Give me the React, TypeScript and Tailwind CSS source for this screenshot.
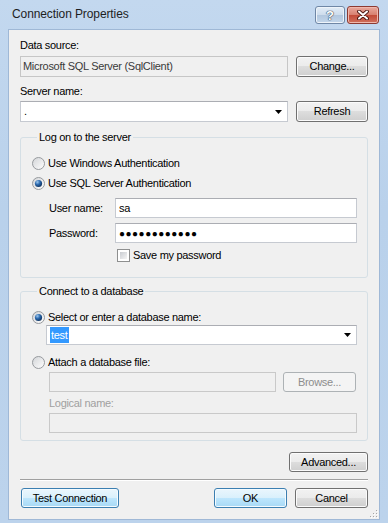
import type { ReactNode } from 'react'

const btnBase = 'flex items-center justify-center rounded-[3px] border text-[#000]'
const btnGray =
  'border-[#707070] bg-[linear-gradient(#f2f2f2_0%,#ebebeb_50%,#dddddd_50%,#cfcfcf_100%)] shadow-[inset_0_0_0_1px_#fbfbfb]'
const btnBlue =
  'border-[#3c7fb1] bg-[linear-gradient(#eaf6fd_0%,#d9f0fc_50%,#bee6fd_50%,#a7d9f5_100%)] shadow-[inset_0_0_0_1px_#f4fbff]'

function Button({ children, className = '', blue = false }: { children: ReactNode; className?: string; blue?: boolean }) {
  return <div className={`${btnBase} ${blue ? btnBlue : btnGray} ${className}`}>{children}</div>
}

function Arrow() {
  return (
    <svg width="7" height="4" viewBox="0 0 7 4" className="shrink-0">
      <path d="M0 0h7L3.5 4z" fill="#000" />
    </svg>
  )
}

function Radio({ checked = false }: { checked?: boolean }) {
  return (
    <svg width="13" height="13" viewBox="0 0 13 13" className="shrink-0">
      <defs>
        <linearGradient id="radioFill" x1="0" y1="0" x2="1" y2="1">
          <stop offset="0" stopColor="#d2d4d7" />
          <stop offset="1" stopColor="#ffffff" />
        </linearGradient>
        <radialGradient id="radioDot" cx="0.35" cy="0.3" r="0.8">
          <stop offset="0" stopColor="#9cc8f0" />
          <stop offset="0.45" stopColor="#2a68ad" />
          <stop offset="1" stopColor="#0a2850" />
        </radialGradient>
      </defs>
      <circle cx="6.5" cy="6.5" r="6" fill="url(#radioFill)" stroke="#979a9e" />
      {checked && <circle cx="6.5" cy="6.5" r="3.6" fill="url(#radioDot)" />}
    </svg>
  )
}

function Checkbox() {
  return (
    <span className="block h-[13px] w-[13px] shrink-0 border border-[#8e8f8f] bg-white p-[2px]">
      <span className="block h-full w-full bg-[linear-gradient(135deg,#c9ccd1,#f5f5f5)]" />
    </span>
  )
}

function TextBox({ children, className = '' }: { children?: ReactNode; className?: string }) {
  return (
    <div className={`flex h-[20px] items-center border border-[#c6cad1] border-t-[#abadb3] bg-white pl-[3px] ${className}`}>
      {children}
    </div>
  )
}

function DisabledBox({ className = '' }: { className?: string }) {
  return <div className={`h-[20px] border border-[#c9c9c9] bg-[#f0f0f0] ${className}`} />
}

export default function App() {
  return (
    <div className="flex h-[523px] w-[388px] flex-col bg-[linear-gradient(180deg,#c3d8ef_0%,#b9d1eb_40%,#bcd3ec_100%)] font-['Liberation_Sans',Arial,sans-serif] text-[11px] tracking-[-0.3px] text-[#000]">
      {/* title bar */}
      <div className="flex h-[29px] shrink-0 items-start justify-between">
        <div className="pl-[12px] pt-[7px] text-[12px] leading-[15px] tracking-[-0.1px] text-[#1e1e1e]">Connection Properties</div>
        <div className="mr-[9px] mt-[6px] flex gap-[2px]">
          <div className="flex h-[18px] w-[30px] items-center justify-center rounded-[3px] border border-[#6f87a6] bg-[linear-gradient(#e3edf7_0%,#cddcec_50%,#b2c7de_50%,#c3d6ea_100%)] shadow-[inset_0_0_0_1px_#eef4fa]">
            <span className="text-[13px] font-bold leading-none tracking-normal text-white [text-shadow:0_0_1px_#36495f,0_0_1px_#36495f,0_0_1px_#36495f]">?</span>
          </div>
          <div className="flex h-[18px] w-[32px] items-center justify-center rounded-[3px] border border-[#8d3a31] bg-[linear-gradient(#e9a99d_0%,#d7806f_50%,#c24a37_50%,#d0705c_100%)] shadow-[inset_0_0_0_1px_#f0b8ad]">
            <svg width="14" height="10" viewBox="0 0 14 10">
              <path d="M3 1.5l8 7M11 1.5l-8 7" stroke="#4a1610" strokeWidth="3.8" strokeLinecap="round" />
              <path d="M3 1.5l8 7M11 1.5l-8 7" stroke="#fff" strokeWidth="2" strokeLinecap="round" />
            </svg>
          </div>
        </div>
      </div>

      {/* client area */}
      <div className="relative ml-[8px] flex h-[491px] w-[372px] flex-col border border-[#9fb8d6] bg-[#f0f0f0] px-[11px] pt-[8px]">
        <div className="leading-[15px]">Data source:</div>
        <div className="mt-[3px] flex h-[21px] gap-[8px]">
          <div className="flex flex-1 items-center border border-[#c6c6c6] bg-[#f0f0f0] pl-[2px] text-[#3a3a3a]">
            Microsoft SQL Server (SqlClient)
          </div>
          <Button className="w-[72px]">Change...</Button>
        </div>

        <div className="mt-[7px] leading-[15px]">Server name:</div>
        <div className="mt-[2px] flex h-[21px] gap-[8px]">
          <TextBox className="h-[21px] flex-1 justify-between pl-[2px] pr-[5px]">
            <span>.</span>
            <Arrow />
          </TextBox>
          <Button className="w-[72px]">Refresh</Button>
        </div>

        {/* log on group */}
        <fieldset className="mt-[8px] rounded-[3px] border border-[#d5dfe5] pb-[15px] pl-[11px] pr-[10px] pt-[8px]">
          <legend className="ml-[5px] px-[2px] leading-[15px]">Log on to the server</legend>
          <div className="flex h-[20px] items-center gap-[3px]">
            <Radio />
            <span>Use Windows Authentication</span>
          </div>
          <div className="flex h-[20px] items-center gap-[3px]">
            <Radio checked />
            <span>Use SQL Server Authentication</span>
          </div>
          <div className="mt-[5px] flex items-center pl-[17px]">
            <span className="w-[66px]">User name:</span>
            <TextBox className="flex-1">sa</TextBox>
          </div>
          <div className="mt-[5px] flex items-center pl-[17px]">
            <span className="w-[66px]">Password:</span>
            <TextBox className="flex-1">
              <span className="text-[10px] tracking-[0.5px]">●●●●●●●●●●●●</span>
            </TextBox>
          </div>
          <div className="mt-[5px] flex h-[14px] items-center gap-[3px] pl-[85px]">
            <Checkbox />
            <span>Save my password</span>
          </div>
        </fieldset>

        {/* database group */}
        <fieldset className="mt-[6px] rounded-[3px] border border-[#d5dfe5] pb-[7px] pl-[11px] pr-[10px] pt-[10px]">
          <legend className="ml-[5px] px-[2px] leading-[15px]">Connect to a database</legend>
          <div className="flex h-[16px] items-center gap-[3px]">
            <Radio checked />
            <span>Select or enter a database name:</span>
          </div>
          <TextBox className="ml-[14px] justify-between pl-[2px] pr-[5px]">
            <span className="bg-[#3399ff] px-[1px] leading-[16px] text-white">test</span>
            <Arrow />
          </TextBox>
          <div className="mt-[9px] flex h-[16px] items-center gap-[3px]">
            <Radio />
            <span>Attach a database file:</span>
          </div>
          <div className="ml-[17px] mr-[1px] mt-[2px] flex gap-[7px]">
            <DisabledBox className="flex-1" />
            <div className="flex h-[20px] w-[73px] items-center justify-center rounded-[3px] border border-[#adb2b5] bg-[#f4f4f4] text-[#8d8d8d]">
              Browse...
            </div>
          </div>
          <div className="ml-[17px] mt-[4px] leading-[15px] text-[#a0a0a0]">Logical name:</div>
          <DisabledBox className="ml-[17px] mt-[2px]" />
        </fieldset>

        <div className="mt-[11px] flex justify-end">
          <Button className="h-[20px] w-[79px]">Advanced...</Button>
        </div>

        <div className="mt-[7px] h-[2px] border-b border-t border-b-white border-t-[#a0a0a0]" />

        <div className="mt-[7px] flex h-[20px] items-center">
          <Button blue className="ml-[1px] h-[20px] w-[98px]">
            Test Connection
          </Button>
          <div className="ml-auto flex gap-[8px]">
            <Button blue className="h-[20px] w-[73px]">
              OK
            </Button>
            <Button className="h-[20px] w-[73px]">Cancel</Button>
          </div>
        </div>

        <svg width="8" height="8" viewBox="0 0 8 8" className="absolute bottom-[1px] right-[1px]">
          {[
            [6, 0],
            [3, 3],
            [6, 3],
            [0, 6],
            [3, 6],
            [6, 6],
          ].map(([x, y]) => (
            <g key={`${x}-${y}`}>
              <rect x={x + 1} y={y + 1} width="1" height="1" fill="#ffffff" />
              <rect x={x} y={y} width="1" height="1" fill="#a6a6a6" />
            </g>
          ))}
        </svg>
      </div>
    </div>
  )
}
